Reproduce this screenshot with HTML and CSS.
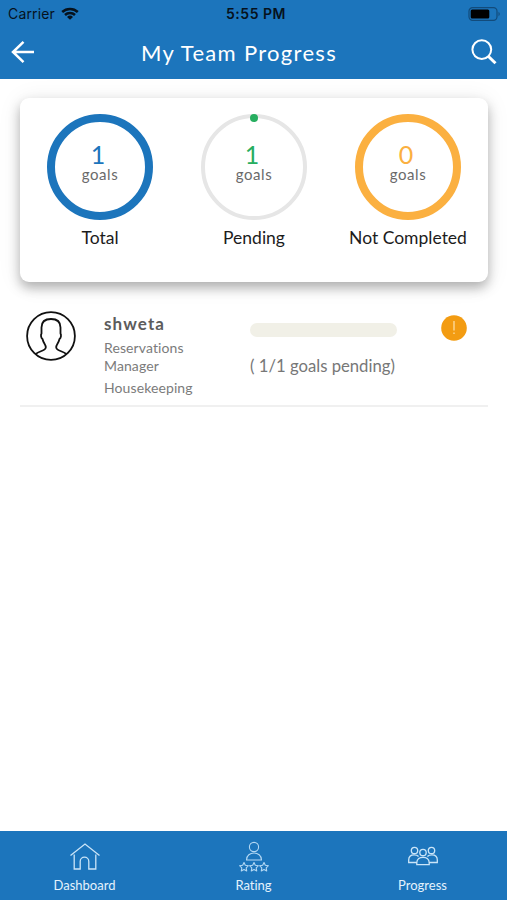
FILE: index.html
```
<!DOCTYPE html>
<html lang="en">
<head>
    <meta charset="UTF-8">
    <meta name="viewport" content="width=device-width, initial-scale=1.0">
    <title>My Team Progress</title>
    <link rel="stylesheet" href="styles.css">
</head>
<body>
    <header class="header">
        <div class="status-bar">
            <div class="carrier">
                <span>Carrier</span>
                <svg width="18" height="13" viewBox="0 0 18 13">
                    <path d="M1.2 5a11.3 11.3 0 0 1 15.6 0M4 8a7.2 7.2 0 0 1 10 0" fill="none" stroke="#06121d" stroke-width="2.5"/>
                    <path d="M9 12.8L6 9.9a4.3 4.3 0 0 1 6 0z" fill="#06121d"/>
                </svg>
            </div>
            <div class="clock">5:55 PM</div>
            <svg class="battery" width="33" height="14" viewBox="0 0 33 14">
                <rect x="1" y=".7" width="28" height="12.6" rx="3.6" fill="none" stroke="#124b7b" stroke-width="1.2"/>
                <rect x="2.7" y="2.5" width="18.6" height="9" rx="1.5" fill="#000"/>
                <path d="M30.5 4.8v4.4c1.7-.8 1.7-3.6 0-4.4z" fill="#124b7b"/>
            </svg>
        </div>
        <div class="nav-bar">
            <svg class="back" width="24" height="22" viewBox="0 0 24 22">
                <path d="M23 11H2M12.5.9L2 11l10.5 10.1" fill="none" stroke="#fff" stroke-width="2.5"/>
            </svg>
            <h1>My Team Progress</h1>
            <svg class="search" width="26" height="26" viewBox="0 0 26 26">
                <circle cx="10.8" cy="10.6" r="9.4" fill="none" stroke="#fff" stroke-width="2"/>
                <path d="M17 17l7.5 7.3" stroke="#fff" stroke-width="3"/>
            </svg>
        </div>
    </header>

    <main class="content">
        <section class="card">
            <div class="stat">
                <div class="ring total">
                    <span class="count">1</span>
                    <span class="unit">goals</span>
                </div>
                <div class="label">Total</div>
            </div>
            <div class="stat">
                <div class="ring pending">
                    <span class="count">1</span>
                    <span class="unit">goals</span>
                </div>
                <div class="label">Pending</div>
            </div>
            <div class="stat">
                <div class="ring missed">
                    <span class="count">0</span>
                    <span class="unit">goals</span>
                </div>
                <div class="label">Not Completed</div>
            </div>
        </section>

        <section class="member">
            <svg class="avatar" width="50" height="50" viewBox="0 0 50 50" fill="none" stroke="#111" stroke-width="1.8">
                <circle cx="25" cy="25" r="23.9"/>
                <path d="M9.8 43c3.5-3 9.7-3.2 10-6.5.2-3-2.300-4-3.300-8.500-1.600-1-1.900-4-1-5.500V16.500c0-6 3-8.500 9.500-8.500s9.500 2.500 9.500 8.500v6c.9 1.500.6 4.500-1 5.500-1 4.500-3.500 5.500-3.300 8.500.3 3.300 6.500 3.500 10 6.500"/>
            </svg>
            <div class="info">
                <div class="name">shweta</div>
                <div class="role">Reservations<br>Manager</div>
                <div class="department">Housekeeping</div>
            </div>
            <div class="goals">
                <div class="bar"></div>
                <div class="goals-text">( 1/1 goals pending)</div>
            </div>
            <svg class="alert" width="26" height="26" viewBox="0 0 26 26">
                <circle cx="13" cy="13" r="12.8" fill="#f39c12"/>
                <path d="M13 6v9.5M13 17.6v1.3" stroke="#ffe3ae" stroke-width="1.2"/>
            </svg>
        </section>
    </main>

    <footer class="tabs">
        <div class="tab">
            <svg width="32" height="32" viewBox="0 0 32 32" fill="none" stroke="#cbe5f8" stroke-width="1.3">
                <path d="M1.500 14.500L16 3l14.500 11.500M5.200 13.500V28h6v-7.500a4.300 4.300 0 0 1 8.600 0V28h7V13.500"/>
            </svg>
            <span>Dashboard</span>
        </div>
        <div class="tab">
            <svg width="32" height="32" viewBox="0 0 32 32" fill="none" stroke="#b3d8f4" stroke-width="1.1" stroke-linejoin="round">
                <circle cx="16" cy="6" r="4.6"/>
                <path d="M8.500 19c0-9.300 15-9.300 15 0z"/>
                <path id="star" d="M6 21.500l1.300 2.800 3.100.4-2.200 2.100.5 3.100L6 28.400l-2.700 1.500.5-3.100-2.200-2.100 3.100-.4z"/>
                <use href="#star" x="10"/>
                <use href="#star" x="20"/>
            </svg>
            <span>Rating</span>
        </div>
        <div class="tab">
            <svg width="32" height="32" viewBox="0 0 32 32" fill="none" stroke="#cbe5f8" stroke-width="1.3">
                <circle cx="7.5" cy="9.5" r="3.2"/>
                <circle cx="24.5" cy="9.5" r="3.2"/>
                <circle cx="16" cy="11.5" r="3.2"/>
                <path d="M9.500 21.500H1.700V19c0-3 2.100-5.200 5.400-5.200 2 0 3.500.6 4.500 1.700M22.500 21.500h7.800V19c0-3-2.100-5.200-5.400-5.200-2 0-3.500.6-4.500 1.700M9.800 23.700v-2c0-7.300 12.400-7.300 12.400 0v2z"/>
            </svg>
            <span>Progress</span>
        </div>
    </footer>
</body>
</html>
```
FILE: styles.css
```
* {
    box-sizing: border-box;
}
body {
    margin: 0;
    height: 900px;
    display: flex;
    flex-direction: column;
    font-family: Lato, sans-serif;
    font-variant-ligatures: none;
    background-color: #fff;
    overflow: hidden;
}
svg {
    display: block;
    flex-shrink: 0;
}
.header {
    height: 79px;
    flex-shrink: 0;
    background-color: #1c75bc;
}
.status-bar {
    height: 27px;
    display: grid;
    grid-template-columns: 1fr 100px 1fr;
    align-items: center;
    padding: 0 6px 0 8px;
    font-family: Inter, sans-serif;
    font-size: 14px;
    color: #06121d;
}
.carrier {
    display: flex;
    align-items: center;
    gap: 6px;
    letter-spacing: 0.15px;
}
.clock {
    padding-left: 3px;
    text-align: center;
    font-weight: 600;
    letter-spacing: 0.5px;
}
.battery {
    justify-self: end;
}
.nav-bar {
    height: 52px;
    display: flex;
    align-items: center;
    justify-content: space-between;
    padding: 0 10px 2px 11px;
}
.nav-bar h1 {
    margin: 0 28px 0 0;
    font-size: 22px;
    font-weight: 400;
    letter-spacing: 1.3px;
    color: #fff;
}
.content {
    flex: 1;
    padding: 19px 19px 0 20px;
}
.card {
    height: 184px;
    display: grid;
    grid-template-columns: repeat(3, 154px);
    justify-content: center;
    padding-top: 16px;
    border-radius: 9px;
    background-color: #fff;
    box-shadow: 0 6px 12px rgba(0,0,0,0.28), 0 2px 24px rgba(0,0,0,0.08);
}
.stat {
    display: flex;
    flex-direction: column;
    align-items: center;
}
.ring {
    position: relative;
    width: 106px;
    height: 106px;
    display: flex;
    flex-direction: column;
    align-items: center;
    border: 8px solid;
    border-radius: 50%;
}
.total {
    border-color: #1c75bc;
    color: #1c75bc;
}
.pending {
    border-width: 4px;
    border-color: #e6e6e6;
    color: #27ae60;
}
.pending:before {
    content: "";
    position: absolute;
    top: -4px;
    left: 45px;
    width: 8px;
    height: 8px;
    border-radius: 50%;
    background-color: #27ae60;
}
.missed {
    border-color: #fbb040;
    color: #fbb040;
}
.count {
    margin: 20px 4px 0 0;
    font-size: 25px;
    line-height: 24px;
}
.pending .count {
    margin-top: 24px;
}
.unit {
    font-size: 15px;
    line-height: 16px;
    letter-spacing: 0.6px;
    color: #6a6a6a;
}
.label {
    margin-top: 7px;
    font-size: 17.5px;
    line-height: 22px;
    white-space: nowrap;
    color: #1c1c1c;
}
.member {
    height: 125px;
    display: flex;
    padding: 29px 21px 0 6px;
    border-bottom: 2px solid #f0f0f0;
}
.info {
    width: 147px;
    margin-left: 28px;
    padding-top: 2px;
    font-size: 14px;
    letter-spacing: 0.1px;
    color: #7b7b7b;
}
.name {
    font-size: 17px;
    line-height: 22px;
    font-weight: 700;
    letter-spacing: 1.1px;
    color: #5c5c5c;
}
.role {
    margin-top: 4px;
    line-height: 18px;
}
.department {
    margin-top: 4px;
    line-height: 18px;
}
.goals {
    flex: 1;
    margin-left: -1px;
}
.bar {
    width: 147px;
    height: 14px;
    margin-top: 12px;
    border-radius: 7px;
    background-color: #f1f0e7;
}
.goals-text {
    margin-top: 18px;
    font-size: 16.7px;
    line-height: 22px;
    white-space: nowrap;
    color: #777;
}
.alert {
    margin-top: 4px;
}
.tabs {
    height: 69px;
    flex-shrink: 0;
    display: grid;
    grid-template-columns: repeat(3, 1fr);
    padding-top: 10px;
    background-color: #1c75bc;
}
.tab {
    display: flex;
    flex-direction: column;
    align-items: center;
    font-size: 13px;
    line-height: 16px;
    color: #e4f2fc;
}
.tab span {
    margin-top: 4px;
}
```
